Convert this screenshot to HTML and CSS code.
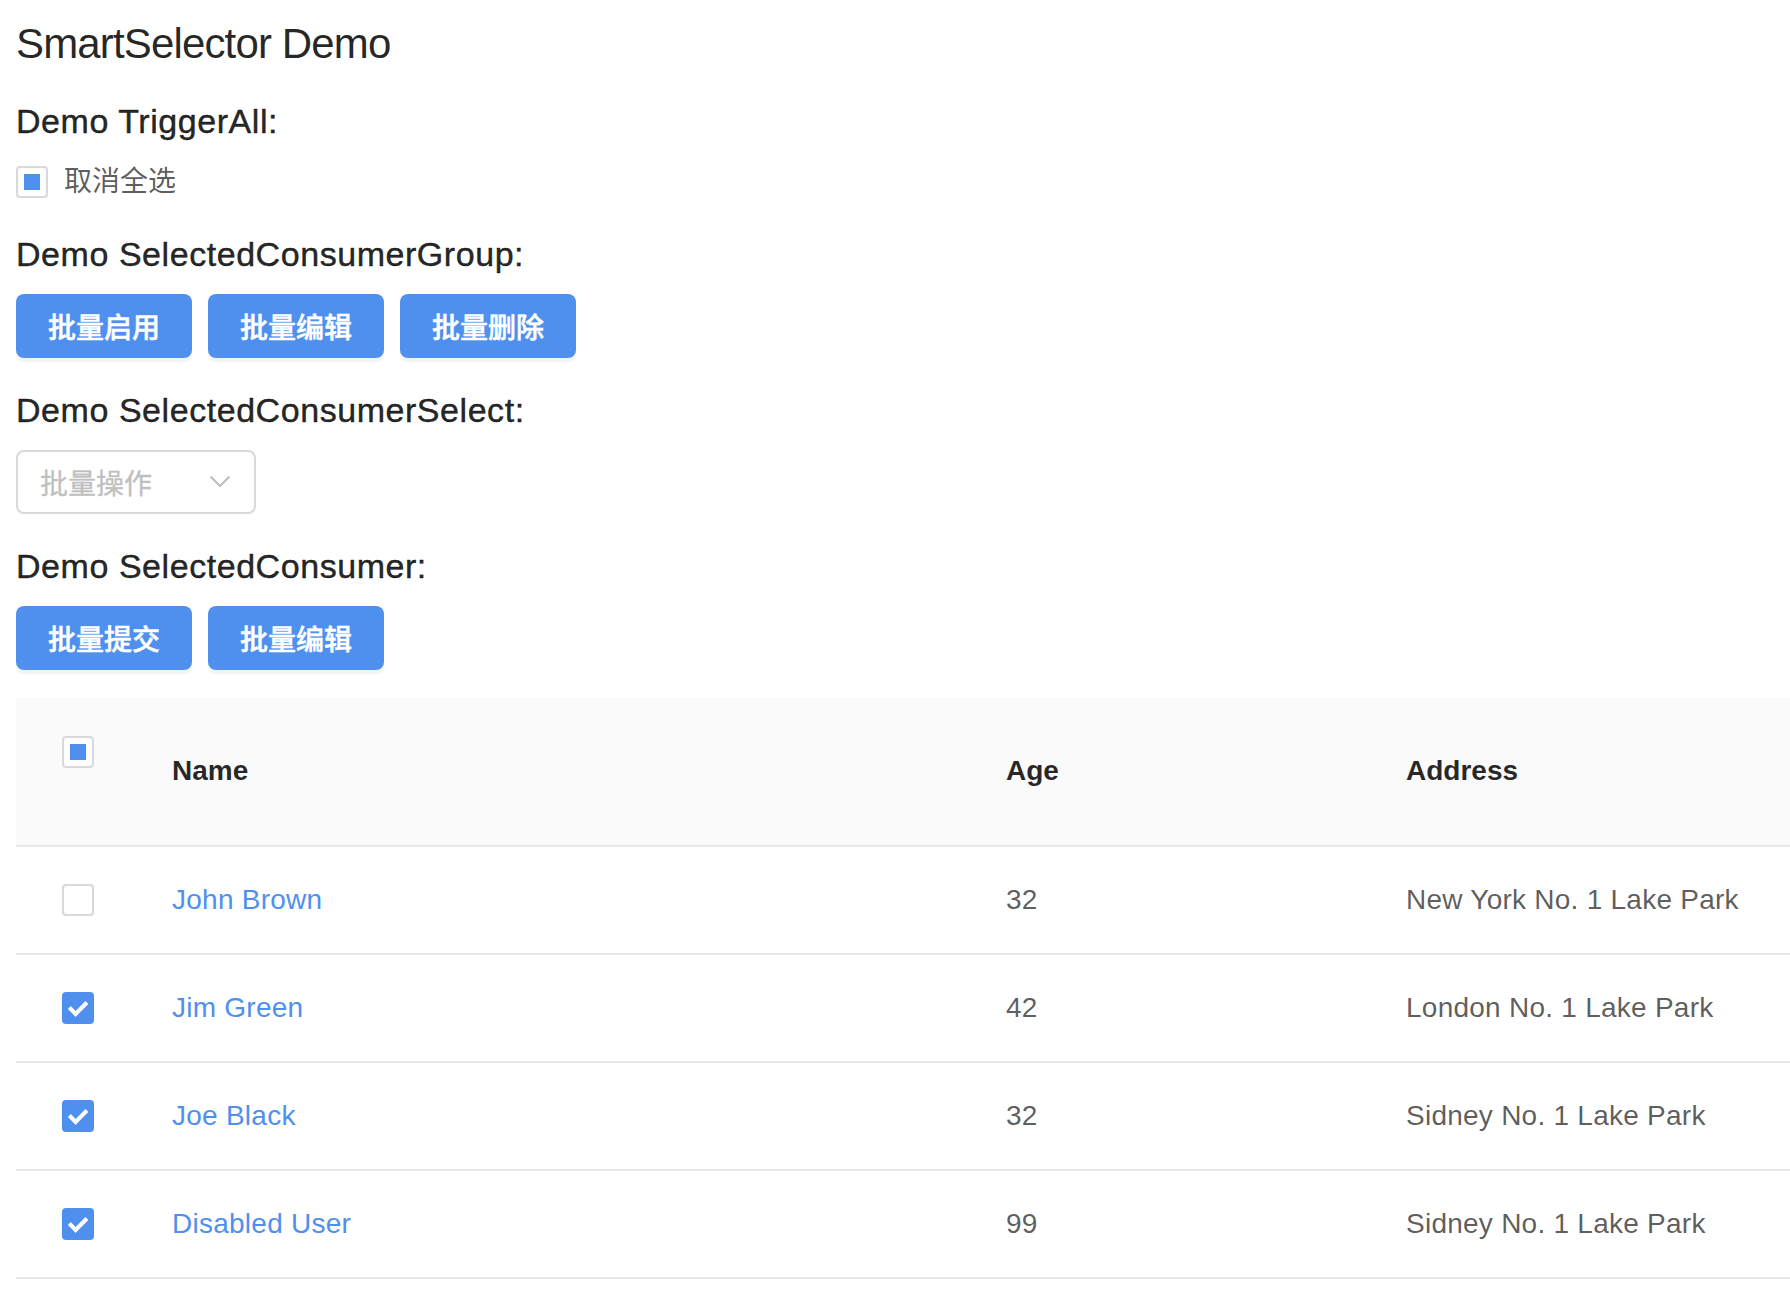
FILE: index.html
```html
<!DOCTYPE html>
<html lang="zh-CN">
<head>
<meta charset="utf-8">
<title>SmartSelector Demo</title>
<link rel="stylesheet" href="styles.css">
</head>
<body>
<div class="page">
  <h1 class="title">SmartSelector Demo</h1>

  <h3 class="section-title first">Demo TriggerAll:</h3>
  <label class="check-row">
    <span class="checkbox indeterminate"></span>
    <span class="check-label">取消全选</span>
  </label>

  <h3 class="section-title after-check">Demo SelectedConsumerGroup:</h3>
  <div class="btn-row">
    <button class="btn">批量启用</button>
    <button class="btn">批量编辑</button>
    <button class="btn">批量删除</button>
  </div>

  <h3 class="section-title">Demo SelectedConsumerSelect:</h3>
  <div class="select">
    <span class="placeholder">批量操作</span>
    <svg class="arrow" width="22" height="13" viewBox="0 0 22 13"><path d="M1.5 1.5 L11 11 L20.5 1.5" fill="none" stroke="#bfbfbf" stroke-width="2.2"/></svg>
  </div>

  <h3 class="section-title">Demo SelectedConsumer:</h3>
  <div class="btn-row">
    <button class="btn">批量提交</button>
    <button class="btn">批量编辑</button>
  </div>

  <table class="table">
    <colgroup>
      <col class="col-sel">
      <col class="col-name">
      <col class="col-age">
      <col class="col-addr">
    </colgroup>
    <thead>
      <tr>
        <th class="sel-head"><span class="checkbox indeterminate"></span></th>
        <th>Name</th>
        <th>Age</th>
        <th>Address</th>
      </tr>
    </thead>
    <tbody>
      <tr>
        <td class="sel"><span class="checkbox"></span></td>
        <td><a class="link">John Brown</a></td>
        <td>32</td>
        <td>New York No. 1 Lake Park</td>
      </tr>
      <tr>
        <td class="sel"><span class="checkbox checked"></span></td>
        <td><a class="link">Jim Green</a></td>
        <td>42</td>
        <td>London No. 1 Lake Park</td>
      </tr>
      <tr>
        <td class="sel"><span class="checkbox checked"></span></td>
        <td><a class="link">Joe Black</a></td>
        <td>32</td>
        <td>Sidney No. 1 Lake Park</td>
      </tr>
      <tr>
        <td class="sel"><span class="checkbox checked"></span></td>
        <td><a class="link">Disabled User</a></td>
        <td>99</td>
        <td>Sidney No. 1 Lake Park</td>
      </tr>
    </tbody>
  </table>
</div>
</body>
</html>
```

FILE: styles.css
```css
* {
  box-sizing: border-box;
}

*::before,
*::after {
  box-sizing: border-box;
}

html, body {
  margin: 0;
  padding: 0;
  background: #fff;
}

body {
  font-family: "Liberation Sans", "Noto Sans CJK SC", sans-serif;
  color: rgba(0, 0, 0, 0.65);
  overflow: hidden;
}

.page {
  padding: 16px 0 0 16px;
}

.title {
  margin: 0;
  font-size: 42px;
  line-height: 56px;
  font-weight: 400;
  letter-spacing: -0.85px;
  color: rgba(0, 0, 0, 0.85);
}

.section-title {
  margin: 27px 0 15px;
  font-size: 34px;
  line-height: 50px;
  font-weight: 400;
  letter-spacing: 0.55px;
  color: rgba(0, 0, 0, 0.85);
  -webkit-text-stroke: 0.45px rgba(0, 0, 0, 0.85);
}

.section-title.first {
  margin-top: 24px;
  margin-bottom: 20px;
}

.section-title.after-check {
  margin-top: 30.5px;
}

.check-row {
  display: flex;
  align-items: center;
  height: 32px;
  gap: 16px;
}

.check-label {
  font-size: 28px;
  line-height: 32px;
  color: rgba(0, 0, 0, 0.65);
}

.checkbox {
  position: relative;
  display: inline-block;
  width: 32px;
  height: 32px;
  border: 2px solid #d9d9d9;
  border-radius: 4px;
  background: #fff;
  vertical-align: middle;
}

.checkbox.indeterminate::after {
  content: "";
  position: absolute;
  left: 50%;
  top: 50%;
  width: 16px;
  height: 16px;
  margin: -8px 0 0 -8px;
  background: #4f90ee;
}

.checkbox.checked {
  background: #4f90ee;
  border-color: #4f90ee;
}

.checkbox.checked::after {
  content: "";
  position: absolute;
  left: 21.5%;
  top: 50%;
  width: 11.4px;
  height: 18.3px;
  border: 4px solid #fff;
  border-top: 0;
  border-left: 0;
  transform: rotate(45deg) translate(-50%, -50%);
}

.btn-row {
  display: flex;
  gap: 16px;
}

.btn {
  width: 176px;
  height: 64px;
  border: none;
  border-radius: 8px;
  background: #4f90ee;
  color: #fff;
  font-family: "Liberation Sans", "Noto Sans CJK SC", sans-serif;
  font-size: 28px;
  font-weight: 500;
  box-shadow: 0 4px 0 rgba(0, 0, 0, 0.045);
  padding: 0;
  -webkit-text-stroke: 0.5px #fff;
}

.select {
  width: 240px;
  height: 64px;
  border: 2px solid #d9d9d9;
  border-radius: 8px;
  display: flex;
  align-items: center;
  justify-content: space-between;
  padding: 0 23px 0 22px;
}

.placeholder {
  font-size: 28px;
  color: #bfbfbf;
  -webkit-text-stroke: 0.3px #bfbfbf;
}

.arrow {
  display: block;
}

.table {
  margin-top: 28px;
  width: 100%;
  border-collapse: collapse;
  table-layout: fixed;
  font-size: 28px;
}

.col-sel { width: 124px; }
.col-name { width: 834px; }
.col-age { width: 400px; }
.col-addr { width: auto; }

.table th {
  height: 148px;
  background: #fafafa;
  border-bottom: 2px solid #e8e8e8;
  text-align: left;
  padding: 0 32px;
  font-weight: 700;
  color: rgba(0, 0, 0, 0.85);
  vertical-align: middle;
}

.table th.sel-head {
  text-align: center;
  vertical-align: top;
  padding: 38px 0 0;
}

.table td {
  height: 108px;
  border-bottom: 2px solid #e8e8e8;
  padding: 0 32px;
  vertical-align: middle;
  color: rgba(0, 0, 0, 0.65);
  letter-spacing: 0.25px;
}

.table td.sel {
  text-align: center;
  padding: 0;
}

.table .checkbox {
  display: block;
  margin: 0 auto;
}

.link {
  color: #4f90ee;
  text-decoration: none;
}
```
